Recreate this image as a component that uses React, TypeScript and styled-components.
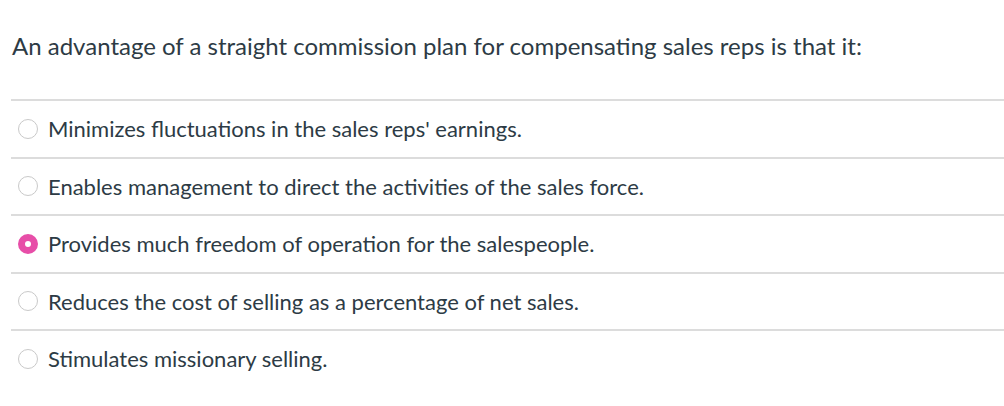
import styled, { createGlobalStyle } from 'styled-components';

const GlobalStyle = createGlobalStyle`
  body {
    margin: 0;
    background: #ffffff;
    font-family: Lato, "Liberation Sans", sans-serif;
    color: #2d3b45;
  }
`;

const Question = styled.div`
  padding: 0 0 0 11px;
`;

const Prompt = styled.p`
  margin: 0;
  padding: 31px 0 0 1px;
  height: 99px;
  box-sizing: border-box;
  font-size: 24px;
  line-height: 30px;
`;

const Answers = styled.ul`
  list-style: none;
  margin: 0;
  padding: 0;
`;

const Answer = styled.li`
  display: flex;
  align-items: center;
  gap: 10px;
  height: 57.5px;
  border-top: 2px solid #dcdcdc;
  box-sizing: border-box;
  padding: 0 0 0 7px;
  font-size: 22px;
`;

const Radio = styled.span<{ checked?: boolean }>`
  width: 20px;
  height: 20px;
  border-radius: 50%;
  box-sizing: border-box;
  flex-shrink: 0;
  border: ${({ checked }) => (checked ? '7px solid #e74ea8' : '1px solid #c9c9c9')};
  background: #ffffff;
`;

const answers = [
  "Minimizes fluctuations in the sales reps' earnings.",
  'Enables management to direct the activities of the sales force.',
  'Provides much freedom of operation for the salespeople.',
  'Reduces the cost of selling as a percentage of net sales.',
  'Stimulates missionary selling.',
];

export default function App() {
  return (
    <>
      <GlobalStyle />
      <Question>
        <Prompt>An advantage of a straight commission plan for compensating sales reps is that it:</Prompt>
        <Answers>
          {answers.map((text, i) => (
            <Answer key={text}>
              <Radio checked={i === 2} />
              {text}
            </Answer>
          ))}
        </Answers>
      </Question>
    </>
  );
}
